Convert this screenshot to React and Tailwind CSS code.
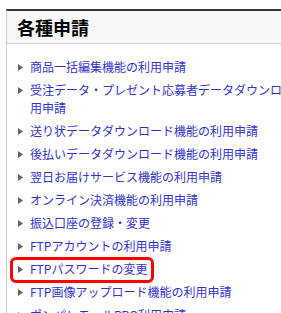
const items = [
  "商品一括編集機能の利用申請",
  "受注データ・プレゼント応募者データダウンロード機能の利用申請",
  "送り状データダウンロード機能の利用申請",
  "後払いデータダウンロード機能の利用申請",
  "翌日お届けサービス機能の利用申請",
  "オンライン決済機能の利用申請",
  "振込口座の登録・変更",
  "FTPアカウントの利用申請",
  "FTPパスワードの変更",
  "FTP画像アップロード機能の利用申請",
  "ポンパレモールPRO利用申請",
];

function Arrow() {
  return (
    <span className="flex h-[18px] w-[5px] shrink-0 items-center">
      <svg width="5" height="7" viewBox="0 0 5 7">
        <path d="M0 0 L5 3.5 L0 7 Z" fill="#666" />
      </svg>
    </span>
  );
}

export default function App() {
  return (
    <div
      className="relative h-[313px] w-[281px] overflow-hidden bg-white"
      style={{ fontFamily: '"Noto Sans CJK JP", "Noto Sans", sans-serif' }}
    >
      <section className="ml-[6px] mt-[9px] w-[400px] border-l border-t-2 border-l-[#cccccc] border-t-[#333333]">
        <h2 className="flex h-[33px] items-center border-b border-[#cccccc] bg-[#f7f7f7] pl-[10px] text-[18px] font-bold leading-none text-black">
          各種申請
        </h2>
        <ul className="space-y-[5px] pl-[11px] pt-[14px]">
          {items.map((item) => (
            <li key={item} className="flex items-start gap-[7px]">
              <Arrow />
              <a href="#" className="w-[330px] text-[12px] leading-[18px] text-[#3333cc]">
                {item}
              </a>
            </li>
          ))}
        </ul>
      </section>
      {/* red highlight drawn over the list */}
      <div className="absolute left-[10px] top-[257px] h-[26px] w-[144px] rounded-[6px] border-[3px] border-[#ff0000]" />
    </div>
  );
}
